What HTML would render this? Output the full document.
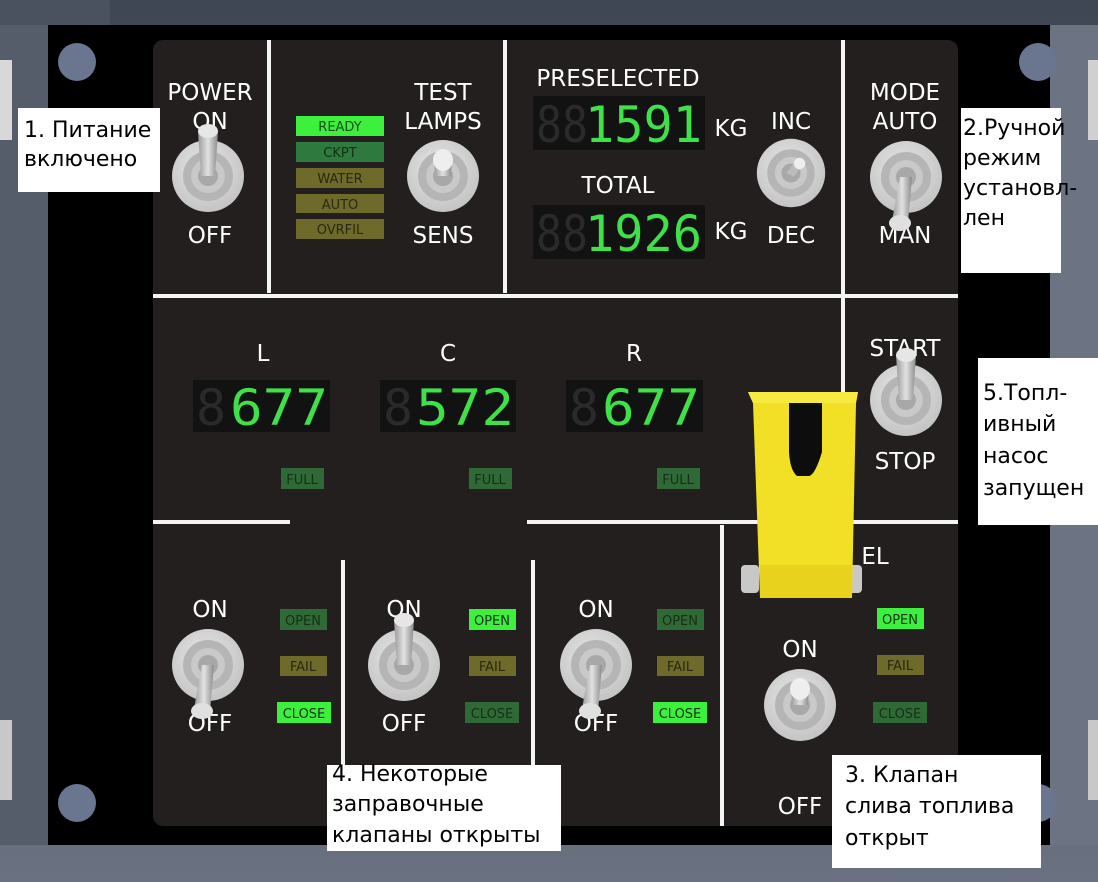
<!DOCTYPE html>
<html><head><meta charset="utf-8"><style>
html,body{margin:0;padding:0;background:#4d5562;}
svg{display:block}
.l{font-family:"DejaVu Sans","Liberation Sans",sans-serif;fill:#fff;font-size:23px;text-anchor:middle}
.lp{font-family:"DejaVu Sans","Liberation Sans",sans-serif;font-size:13px;text-anchor:middle}
.dg{font-family:"DejaVu Sans Mono","Liberation Mono",monospace;font-size:50px}
.an{font-family:"DejaVu Sans","Noto Sans CJK SC",sans-serif;font-size:22px;fill:#000}
</style></head><body>
<svg width="1098" height="882" viewBox="0 0 1098 882" xmlns="http://www.w3.org/2000/svg">
<defs>
<linearGradient id="bg" x1="0" y1="0" x2="0" y2="1"><stop offset="0" stop-color="#3f4654"/><stop offset="1" stop-color="#6a7180"/></linearGradient>
<radialGradient id="base" cx="0.45" cy="0.4" r="0.6"><stop offset="0" stop-color="#e8e8e8"/><stop offset="1" stop-color="#c4c4c4"/></radialGradient>
<linearGradient id="lev" x1="0" y1="0" x2="1" y2="0"><stop offset="0" stop-color="#9a9a9a"/><stop offset="0.5" stop-color="#e2e2e2"/><stop offset="1" stop-color="#8a8a8a"/></linearGradient>
<g id="tb"><circle r="36" fill="url(#base)"/><circle r="25" fill="#b5b5b5"/><circle r="17" fill="#c9c9c9"/><circle r="10" fill="#a8a8a8"/></g>
<g id="tu"><use href="#tb"/><path d="M-7 0 L-10 -45 L10 -45 L7 0 Z" fill="url(#lev)"/><ellipse cx="0" cy="-45" rx="10" ry="7" fill="#e6e6e6"/></g>
<g id="td"><use href="#tb"/><path d="M-6 0 L-14 44 L2 46 L6 0 Z" fill="url(#lev)"/><ellipse cx="-6" cy="46" rx="11" ry="8" fill="#e0e0e0"/></g>
<g id="tc"><use href="#tb"/><path d="M-8 0 L-9 -18 L9 -18 L8 0 Z" fill="url(#lev)"/><ellipse cx="0" cy="-16" rx="10" ry="11" fill="#eeeeee"/></g>
</defs>
<rect width="1098" height="882" fill="url(#bg)"/>
<rect x="0" y="0" width="110" height="25" fill="#4a5260"/>
<rect x="1050" y="25" width="48" height="820" fill="#6c7382"/>
<rect x="0" y="25" width="48" height="820" fill="#555d6b"/>
<rect x="0" y="60" width="12" height="80" fill="#d8d8d8"/>
<rect x="0" y="720" width="12" height="80" fill="#c8c8c8"/>
<rect x="1088" y="60" width="10" height="80" fill="#d0d0d0"/>
<rect x="1088" y="720" width="10" height="80" fill="#c8c8c8"/>
<rect x="48" y="25" width="1002" height="820" fill="#000"/>
<circle cx="77" cy="62" r="19" fill="#6a7590"/><circle cx="1038" cy="62" r="19" fill="#6a7590"/>
<circle cx="77" cy="803" r="19" fill="#6a7590"/><circle cx="1038" cy="803" r="19" fill="#6a7590"/>
<rect x="153" y="40" width="805" height="786" rx="10" fill="#221f1e"/>
<g fill="#f4f4f4">
<rect x="267" y="40" width="4" height="253"/><rect x="503" y="40" width="4" height="253"/><rect x="841" y="40" width="4" height="480"/>
<rect x="153" y="294" width="805" height="4"/>
<rect x="153" y="520" width="137" height="4"/><rect x="527" y="520" width="431" height="4"/>
<rect x="341" y="560" width="4" height="266"/><rect x="531" y="560" width="4" height="266"/><rect x="720" y="525" width="4" height="301"/>
</g>
<!-- labels -->
<text class="l" x="210" y="100">POWER</text><text class="l" x="210" y="129">ON</text><text class="l" x="210" y="243">OFF</text>
<text class="l" x="443" y="100">TEST</text><text class="l" x="443" y="129">LAMPS</text><text class="l" x="443" y="243">SENS</text>
<text class="l" x="618" y="86">PRESELECTED</text><text class="l" x="618" y="193">TOTAL</text>
<text class="l" x="731" y="136">KG</text><text class="l" x="731" y="239">KG</text>
<text class="l" x="791" y="129">INC</text><text class="l" x="791" y="243">DEC</text>
<text class="l" x="905" y="100">MODE</text><text class="l" x="905" y="129">AUTO</text><text class="l" x="905" y="243">MAN</text>
<text class="l" x="263" y="361">L</text><text class="l" x="448" y="361">C</text><text class="l" x="634" y="361">R</text>
<text class="l" x="905" y="356">START</text><text class="l" x="905" y="469">STOP</text>
<text class="l" x="875" y="564">EL</text>
<text class="l" x="210" y="617">ON</text><text class="l" x="210" y="731">OFF</text>
<text class="l" x="404" y="617">ON</text><text class="l" x="404" y="731">OFF</text>
<text class="l" x="596" y="617">ON</text><text class="l" x="596" y="731">OFF</text>
<text class="l" x="800" y="657">ON</text><text class="l" x="800" y="814">OFF</text>
<!-- lamps -->
<g class="lp">
<rect x="296" y="116" width="88" height="20" fill="#3df03d"/><text x="340" y="131" fill="#1a4a1a">READY</text>
<rect x="296" y="142" width="88" height="20" fill="#2e7a3e"/><text x="340" y="157" fill="#153015">CKPT</text>
<rect x="296" y="168" width="88" height="20" fill="#6e6a2a"/><text x="340" y="183" fill="#2a2810">WATER</text>
<rect x="296" y="194" width="88" height="19" fill="#6e6a2a"/><text x="340" y="209" fill="#2a2810">AUTO</text>
<rect x="296" y="219" width="88" height="20" fill="#6e6a2a"/><text x="340" y="234" fill="#2a2810">OVRFIL</text>
<rect x="281" y="468" width="43" height="21" fill="#2f6a36"/><text x="302" y="484" fill="#153015">FULL</text>
<rect x="469" y="468" width="43" height="21" fill="#2f6a36"/><text x="490" y="484" fill="#153015">FULL</text>
<rect x="657" y="468" width="43" height="21" fill="#2f6a36"/><text x="678" y="484" fill="#153015">FULL</text>
<rect x="280" y="609" width="47" height="21" fill="#2f6a36"/><text x="303" y="625" fill="#153015">OPEN</text>
<rect x="280" y="656" width="47" height="20" fill="#6e6a2a"/><text x="303" y="671" fill="#2a2810">FAIL</text>
<rect x="277" y="702" width="54" height="21" fill="#3df03d"/><text x="304" y="718" fill="#153015">CLOSE</text>
<rect x="469" y="609" width="47" height="21" fill="#3df03d"/><text x="492" y="625" fill="#153015">OPEN</text>
<rect x="469" y="656" width="47" height="20" fill="#6e6a2a"/><text x="492" y="671" fill="#2a2810">FAIL</text>
<rect x="465" y="702" width="54" height="21" fill="#2f6a36"/><text x="492" y="718" fill="#153015">CLOSE</text>
<rect x="657" y="609" width="47" height="21" fill="#2f6a36"/><text x="680" y="625" fill="#153015">OPEN</text>
<rect x="657" y="656" width="47" height="20" fill="#6e6a2a"/><text x="680" y="671" fill="#2a2810">FAIL</text>
<rect x="653" y="702" width="54" height="21" fill="#3df03d"/><text x="680" y="718" fill="#153015">CLOSE</text>
<rect x="877" y="608" width="47" height="21" fill="#3df03d"/><text x="900" y="624" fill="#153015">OPEN</text>
<rect x="877" y="655" width="47" height="20" fill="#6e6a2a"/><text x="900" y="670" fill="#2a2810">FAIL</text>
<rect x="873" y="702" width="54" height="21" fill="#2f6a36"/><text x="900" y="718" fill="#153015">CLOSE</text>
</g>
<!-- displays -->
<g class="dg">
<rect x="533" y="96" width="172" height="54" fill="#121212"/>
<text x="536" y="142" fill="#2a2a2a" textLength="52" lengthAdjust="spacingAndGlyphs">88</text>
<text x="585" y="142" fill="#3fe048" textLength="117" lengthAdjust="spacingAndGlyphs">1591</text>
<rect x="533" y="205" width="172" height="54" fill="#121212"/>
<text x="536" y="251" fill="#2a2a2a" textLength="52" lengthAdjust="spacingAndGlyphs">88</text>
<text x="585" y="251" fill="#3fe048" textLength="117" lengthAdjust="spacingAndGlyphs">1926</text>
<rect x="193" y="380" width="137" height="52" fill="#121212"/>
<text x="196" y="425" fill="#2a2a2a" textLength="30" lengthAdjust="spacingAndGlyphs">8</text>
<text x="230" y="425" fill="#3fe048" textLength="98" lengthAdjust="spacingAndGlyphs">677</text>
<rect x="380" y="380" width="136" height="52" fill="#121212"/>
<text x="383" y="425" fill="#2a2a2a" textLength="30" lengthAdjust="spacingAndGlyphs">8</text>
<text x="416" y="425" fill="#3fe048" textLength="98" lengthAdjust="spacingAndGlyphs">572</text>
<rect x="566" y="380" width="137" height="52" fill="#121212"/>
<text x="569" y="425" fill="#2a2a2a" textLength="30" lengthAdjust="spacingAndGlyphs">8</text>
<text x="602" y="425" fill="#3fe048" textLength="98" lengthAdjust="spacingAndGlyphs">677</text>
</g>
<!-- toggles -->
<use href="#tu" x="208" y="176"/>
<use href="#tc" x="443" y="176"/>
<g transform="translate(791 173) scale(0.95)"><use href="#tb"/><path d="M-5 0 L4 -12 L12 -8 L3 4 Z" fill="#bbb"/><circle cx="9" cy="-10" r="6" fill="#eee"/></g>
<use href="#td" x="906" y="177"/>
<use href="#tu" x="906" y="400"/>
<use href="#td" x="208" y="665"/>
<use href="#tu" x="404" y="665"/>
<use href="#td" x="596" y="665"/>
<use href="#tc" x="800" y="705"/>
<!-- yellow guard -->
<rect x="741" y="565" width="18" height="28" rx="4" fill="#c8c8c8"/>
<rect x="844" y="565" width="18" height="28" rx="4" fill="#c8c8c8"/>
<path d="M748 392 L858 392 L856 403 L852 598 L760 598 L753 403 Z" fill="#f2e027"/>
<path d="M748 392 L858 392 L856 403 L753 403 Z" fill="#f7ea40"/>
<path d="M760 565 L852 565 L852 598 L760 598 Z" fill="#e8d21e"/>
<path d="M789 403 L822 403 L822 452 Q815 475 809 476 L797 476 Q790 470 789 452 Z" fill="#0d0d0d"/>
<!-- annotations -->
<rect x="18" y="108" width="142" height="84" fill="#fff"/>
<text class="an" x="24" y="137">1. Питание</text><text class="an" x="24" y="166">включено</text>
<rect x="961" y="108" width="100" height="165" fill="#fff"/>
<text class="an" x="963" y="135">2.Ручной</text><text class="an" x="963" y="165">режим</text><text class="an" x="963" y="195">установл-</text><text class="an" x="963" y="225">лен</text>
<rect x="978" y="358" width="120" height="167" fill="#fff"/>
<text class="an" x="983" y="400">5.Топл-</text><text class="an" x="983" y="431">ивный</text><text class="an" x="983" y="463">насос</text><text class="an" x="983" y="495">запущен</text>
<rect x="327" y="765" width="234" height="86" fill="#fff"/>
<text class="an" x="332" y="781">4. Некоторые</text><text class="an" x="332" y="811">заправочные</text><text class="an" x="332" y="842">клапаны открыты</text>
<rect x="832" y="755" width="209" height="113" fill="#fff"/>
<text class="an" x="845" y="782">3. Клапан</text><text class="an" x="845" y="813">слива топлива</text><text class="an" x="845" y="845">открыт</text>
</svg>
</body></html>
